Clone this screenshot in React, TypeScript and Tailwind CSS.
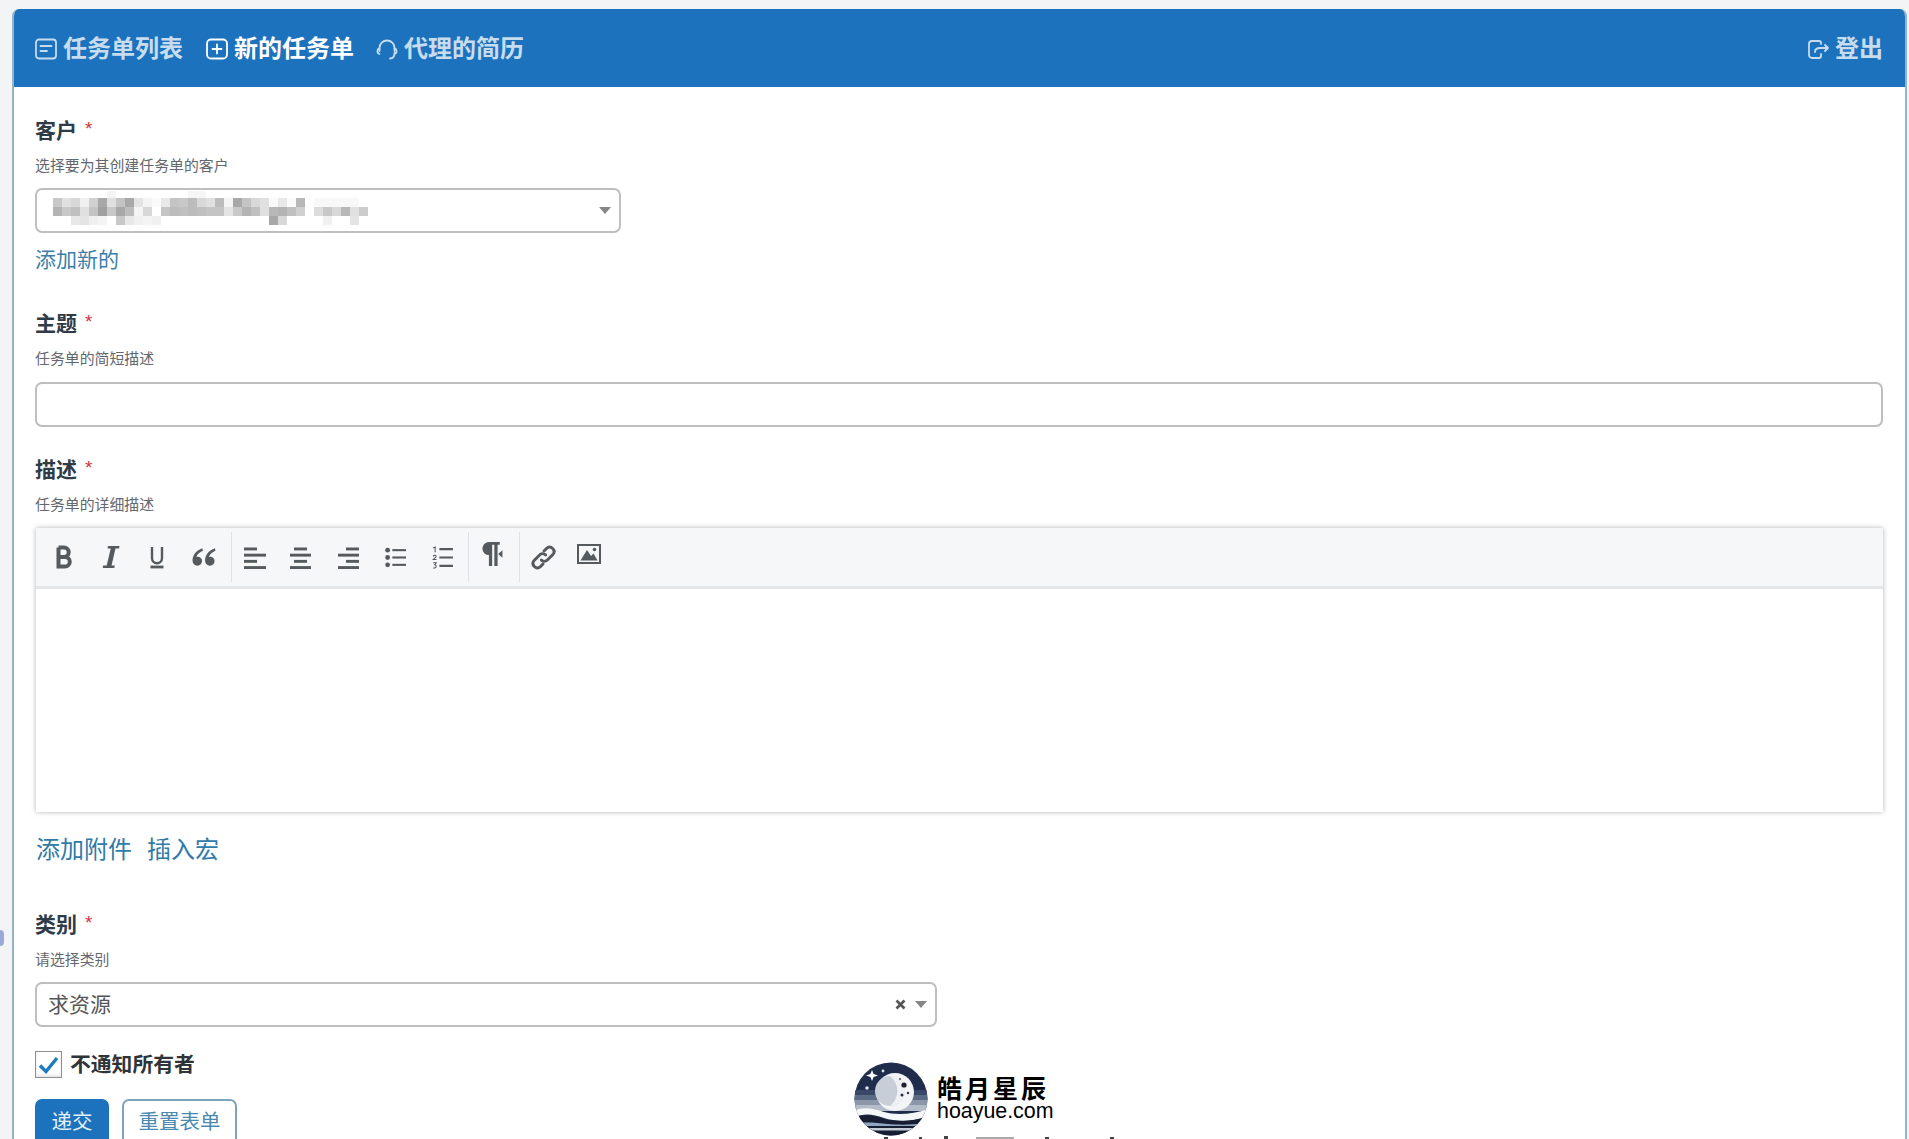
import React from "react";

const FONT = '"Liberation Sans","Noto Sans CJK SC",sans-serif';

function NavIcon({ kind, cls }: { kind: string; cls: string }) {
  return (
    <svg width="22" height="22" viewBox="0 0 22 22" fill="none" stroke="currentColor" strokeWidth="1.8" strokeLinecap="round" strokeLinejoin="round" className={cls}>
      {kind === "list" && (
        <>
          <rect x="1" y="1.500" width="20" height="19" rx="3" />
          <path d="M5.500 8h11M5.500 13h6.500" />
        </>
      )}
      {kind === "plus" && (
        <>
          <rect x="1" y="1.500" width="20" height="19" rx="4" />
          <path d="M11 6.500v9M6.500 11h9" />
        </>
      )}
      {kind === "head" && (
        <>
          <path d="M3.500 13V10a7.500 7.500 0 0 1 15 0v3" />
          <path d="M3.500 10.500c-2.500.5-3 4.500 0 5.500M18.500 10.500c2.500.5 3 4.500 0 5.500M18.500 15c0 3.500-2 5.500-4.500 5.500" />
        </>
      )}
      {kind === "out" && (
        <>
          <path d="M14 16v2a2 2 0 0 1-2 2H5a3 3 0 0 1-3-3V6a3 3 0 0 1 3-3h7a2 2 0 0 1 2 2v1" />
          <path d="M8 14c0-3 2-4 5-4h8M18 7l3 3-3 3" />
        </>
      )}
    </svg>
  );
}

function Field({ title, help, mt, children }: { title: string; help: string; mt: string; children: React.ReactNode }) {
  return (
    <div className={mt}>
      <div className="h-[30px] pt-[2px] flex items-center text-[21px] font-bold text-[#2f3c48] leading-[28px]">
        {title}
        <span className="ml-[8px] -mt-[4px] text-[19px] font-normal text-[#d0323c]">*</span>
      </div>
      <div className="mt-[11px] h-[20px] text-[14.9px] leading-[20px] text-[#63686e]">{help}</div>
      {children}
    </div>
  );
}

function Caret() {
  return <span className="w-0 h-0 border-x-[6px] border-x-transparent border-t-[7px] border-t-[#868686]" />;
}

const rowTop = ["", "", "", "", "", "", "#f4f4f4", "", "", "", "", "", "", "", "", "#f6f6f6", "#f6f6f6"];
const rowA = ["#c8c8c8", "#e0e0e0", "#d8d8d8", "#f0f0f0", "#d0d0d0", "#a8a8a8", "#e0e0e0", "#c4c4c4", "#a8a8a8", "#e4e4e4", "#f4f4f4", "#fafafa", "#e8e8e8", "#c4c4c4", "#c8c8c8", "#bcbcbc", "#d8d8d8", "#e0e0e0", "#bcbcbc", "#f4f4f4", "#a8a8a8", "#c4c4c4", "#d8d8d8", "#e0e0e0", "#fafafa", "#e8e8e8", "#fafafa", "#b8b8b8", "", "#f8f8f8", "#f8f8f8", "#f8f8f8", "#f8f8f8", "#f8f8f8", ""];
const rowB = ["#b4b4b4", "#c8c8c8", "#c0c0c0", "#e0e0e0", "#c4c4c4", "#a0a0a0", "#c8c8c8", "#a8a8a8", "#bcbcbc", "#f4f4f4", "#d8d8d8", "", "#c4c4c4", "#bcbcbc", "#c0c0c0", "#bcbcbc", "#c0c0c0", "#c4c4c4", "#c4c4c4", "#e4e4e4", "#c8c8c8", "#b4b4b4", "#c0c0c0", "#e0e0e0", "#b8b8b8", "#b4b4b4", "#c0c0c0", "#d0d0d0", "", "#dcdcdc", "#c8c8c8", "#d8d8d8", "#b8b8b8", "#e0e0e0", "#cccccc"];
const rowC = ["", "", "#e8e8e8", "#e4e4e4", "#f0f0f0", "#f4f4f4", "", "#c8c8c8", "#e8e8e8", "#f0f0f0", "#f4f4f4", "#f0f0f0", "", "", "", "", "", "", "", "", "", "", "", "", "#a8a8a8", "#d8d8d8", "", "", "", "", "#f0f0f0", "", "", "#e4e4e4", ""];

function BlurredValue() {
  const rows: [string[], number][] = [[rowTop, 2], [rowA, 9], [rowB, 18], [rowC, 27]];
  return (
    <svg width="340" height="43" viewBox="0 0 340 43" className="absolute -left-[2px] -top-[1px]">
      {rows.map(([row, y], r) =>
        row.map((c, i) => (c ? <rect key={`${r}-${i}`} x={18 + i * 9} y={y} width="9" height="9" fill={c} /> : null))
      )}
    </svg>
  );
}

const G = "#555a5e";
function Tool({ w, children }: { w: string; children: React.ReactNode }) {
  return <div className={`${w} h-full flex items-center justify-center shrink-0`}>{children}</div>;
}
function Sep() {
  return <div className="w-px h-[50px] self-center bg-[#e0e3e5] shrink-0" />;
}
function Lines({ rows }: { rows: [number, number][] }) {
  return (
    <svg width="23" height="23" viewBox="0 0 23 23">
      {rows.map((r, i) => (
        <rect key={i} x={r[0]} y={1.5 + i * 6.2} width={r[1]} height="2.900" fill={G} />
      ))}
    </svg>
  );
}

function Toolbar() {
  return (
    <div className="h-[61px] bg-[#f5f7f8] border-b-[3px] border-b-[#e3e5e6] flex items-center pl-[4px]">
      <Tool w="w-[47px]">
        <svg width="18" height="24" viewBox="0 0 18 24" fill="none" stroke={G} strokeWidth="4"><path d="M3.500 2.500v19h6.500a4.800 4.800 0 0 0 0-9.600H3.500M3.500 11.900H9a4.700 4.700 0 0 0 0-9.400H3.500" /></svg>
      </Tool>
      <Tool w="w-[47px]">
        <svg width="18" height="24" viewBox="0 0 18 24" fill={G}><path d="M6 1h11.500l-.5 2.500h-3.500L9.500 20.500h3.300l-.5 2.500H.7l.5-2.500h3.500L8.700 3.500H5.500z" /></svg>
      </Tool>
      <Tool w="w-[46px]">
        <svg width="16" height="24" viewBox="0 0 16 24" fill="none" stroke={G}><path d="M3 2v11c0 7 10 7 10 0V2" strokeWidth="2.400" /><path d="M1.500 22h13" strokeWidth="2.800" /></svg>
      </Tool>
      <Tool w="w-[47px]">
        <svg width="24" height="20" viewBox="0 0 22 18" fill={G}><path d="M9.500 1C4 3 .5 7 .5 12c0 3 2 5 4.500 5s4.200-1.900 4.200-4.300-1.700-4-4-4c-.5 0-.9.100-1.200.2C4.800 6.500 6.800 4.500 10 3.200zM21 1c-5.500 2-9 6-9 11 0 3 2 5 4.500 5s4.200-1.900 4.200-4.300-1.700-4-4-4c-.5 0-.9.100-1.200.2.800-2.400 2.800-4.400 6-5.700z" /></svg>
      </Tool>
      <div className="w-[4px]" />
      <Sep />
      <Tool w="w-[44px]"><Lines rows={[[1, 13], [1, 22], [1, 13], [1, 22]]} /></Tool>
      <Tool w="w-[49px]"><Lines rows={[[5, 13], [1, 21], [5, 13], [1, 21]]} /></Tool>
      <Tool w="w-[46px]"><Lines rows={[[9, 13], [1, 21], [9, 13], [1, 21]]} /></Tool>
      <Tool w="w-[48px]">
        <svg width="21" height="21" viewBox="0 0 20 20" fill={G}>
          <circle cx="2.500" cy="3" r="2.300" /><circle cx="2.500" cy="10" r="2.300" /><circle cx="2.500" cy="17" r="2.300" />
          <rect x="7" y="2" width="13" height="2" /><rect x="7" y="9" width="13" height="2" /><rect x="7" y="16" width="13" height="2" />
        </svg>
      </Tool>
      <Tool w="w-[46px]">
        <svg width="21" height="23" viewBox="0 0 20 22" fill="none" stroke={G}>
          <path d="M1 2l2-1v5M1 10c1-2 3.500-1 2.600.6L1 13h3.200M1 16h3l-1.500 2c2 0 2 3-.1 3H1" strokeWidth="1" />
          <path d="M7 3h13M7 11h13M7 19h13" strokeWidth="2" />
        </svg>
      </Tool>
      <div className="w-[3px]" />
      <Sep />
      <Tool w="w-[42px]">
        <svg width="26" height="26" viewBox="0 0 24 24" fill={G} className="-mt-[6px]"><path d="M9 1h12v2.500h-2V23h-3V3.500h-2V23h-3V13a6 6 0 0 1 0-12h-.1z" /><path d="M23.500 8.500v7L19.500 12z" /></svg>
      </Tool>
      <div className="w-[8px]" />
      <Sep />
      <Tool w="w-[47px]">
        <svg width="27" height="27" viewBox="0 0 26 26" fill="none" stroke={G} strokeWidth="2.800" strokeLinecap="round"><path d="M11 15.500c2 1.800 4.500 1.300 6-.3l5-5c3.500-4-2-9.500-6-6l-2.500 2.500" /><path d="M15 10.500c-2-1.800-4.500-1.300-6 .3l-5 5c-3.500 4 2 9.500 6 6l2.500-2.500" /></svg>
      </Tool>
      <Tool w="w-[44px]">
        <svg width="24" height="20" viewBox="0 0 24 20" className="-mt-[6px]"><rect x="1" y="1" width="22" height="18" fill="none" stroke={G} strokeWidth="2" /><path d="M3.500 16.500 10 6l4 6 2.500-2.500 4 7z" fill={G} /><circle cx="17.500" cy="5.500" r="1.800" fill={G} /></svg>
      </Tool>
    </div>
  );
}

function Logo() {
  return (
    <svg width="74" height="74" viewBox="0 0 74 74">
      <defs>
        <clipPath id="disc"><circle cx="37" cy="37" r="36.500" /></clipPath>
      </defs>
      <g clipPath="url(#disc)">
        <rect width="74" height="74" fill="#1f2c4c" />
        <rect y="28" width="74" height="5" fill="#3a4868" />
        <rect y="33" width="74" height="5" fill="#5d6a84" />
        <rect y="38" width="74" height="5" fill="#8c97aa" />
        <rect y="43" width="74" height="6" fill="#b4bcca" />
        <circle cx="41" cy="30" r="19" fill="#f3f4f6" />
        <circle cx="36" cy="29" r="15" fill="#c8ced8" />
        <path d="M36 14a15 15 0 0 1 0 30 19 19 0 0 0 0-30z" fill="#eef0f3" />
        <circle cx="50" cy="23" r="2.600" fill="#1c2230" />
        <circle cx="48" cy="33" r="1.500" fill="#2a3040" />
        <circle cx="54" cy="31" r="1.200" fill="#2a3040" />
        <circle cx="46" cy="17" r="0.900" fill="#3a4050" />
        <path d="M0 49c10-5 20-2 30 1s28 3 44-3v7c-14 6-32 6-44 2S10 51 0 56z" fill="#f5f6f8" />
        <path d="M0 56c10-5 20-2 30 1s30 3 44-3v20H0z" fill="#171e33" />
        <path d="M4 61c10-1 20 0 30 1s26 1 36-1v3H4z" fill="#93a6bf" />
        <rect y="66" width="74" height="2.500" fill="#c5ccd8" />
      </g>
      <path d="M18 8l1.600 4L24 13.500l-4.400 1.600L18 19l-1.600-3.900L12 13.500l4.400-1.500z" fill="#fff" />
      <circle cx="29" cy="9" r="1.400" fill="#dfe4ee" />
      <circle cx="13" cy="26" r="1.800" fill="#dfe4ee" />
    </svg>
  );
}

export default function App() {
  return (
    <div className="relative h-[1139px] overflow-hidden bg-[#f3f4f6] pt-[9px] pl-[12px] pr-[2px]" style={{ fontFamily: FONT }}>
      <div className="absolute left-0 top-[930px] w-[4px] h-[16px] rounded-r-full bg-[#9aa9d8]" />
      <div className="min-h-[1200px] rounded-t-[7px] bg-white border-x-2 border-x-[#94b3c8] overflow-hidden">
        <header className="-mx-[2px] h-[78px] pt-[2px] bg-[#1d72bd] flex items-center pl-[23px] pr-[24px] text-[24px] font-bold">
          <nav className="flex items-center text-[#c7dcef]">
            <a className="flex items-center gap-[6px]"><NavIcon kind="list" cls="text-[#c7dcef]" />任务单列表</a>
            <a className="ml-[23px] flex items-center gap-[6px] text-white"><NavIcon kind="plus" cls="text-white" />新的任务单</a>
            <a className="ml-[22px] flex items-center gap-[6px]"><NavIcon kind="head" cls="text-[#c7dcef]" />代理的简历</a>
          </nav>
          <a className="ml-auto flex items-center gap-[6px] text-[#c7dcef]"><NavIcon kind="out" cls="text-[#c7dcef]" />登出</a>
        </header>

        <main className="pl-[21px] pr-[22px]">
          <Field title="客户" help="选择要为其创建任务单的客户" mt="mt-[28px]">
            <div className="relative mt-[12px] w-[586px] h-[45px] bg-white border-2 border-[#bcbec0] rounded-[7px] flex items-center justify-end pr-[8px]">
              <BlurredValue />
              <Caret />
            </div>
            <a className="block mt-[12px] h-[30px] leading-[30px] text-[21px] text-[#3b7fa8]">添加新的</a>
          </Field>

          <Field title="主题" help="任务单的简短描述" mt="mt-[33px]">
            <div className="mt-[13px] h-[45px] bg-white border-2 border-[#bcbec0] rounded-[7px]" />
          </Field>

          <Field title="描述" help="任务单的详细描述" mt="mt-[27px]">
            <div className="mt-[13px] h-[284px] bg-white shadow-[0_0_5px_rgba(0,0,0,0.3)] ml-[1px]">
              <Toolbar />
            </div>
          </Field>

          <div className="mt-[23px] h-[30px] flex gap-[15px] pl-[1px] text-[24px] leading-[30px] text-[#2f7ba8]">
            <a>添加附件</a>
            <a>插入宏</a>
          </div>

          <Field title="类别" help="请选择类别" mt="mt-[44px]">
            <div className="mt-[12px] w-[902px] h-[45px] bg-white border-2 border-[#bcbec0] rounded-[7px] flex items-center pl-[11px] pr-[8px] text-[21px] text-[#555]">
              求资源
              <svg width="11" height="11" viewBox="0 0 11 11" className="ml-auto mr-[9px]"><path d="M1.500 1.500l8 8M9.500 1.500l-8 8" stroke="#555" strokeWidth="2.600" /></svg>
              <Caret />
            </div>
          </Field>

          <label className="mt-[24px] h-[27px] flex items-center gap-[8px]">
            <span className="w-[27px] h-[27px] bg-white border border-[#8f8f8f] shadow-[inset_0_-2px_3px_rgba(0,0,0,0.1)] flex items-center justify-center">
              <svg width="21" height="18" viewBox="0 0 21 18" fill="none"><path d="M2 9.500l6 6L19 2" stroke="#1d7cc0" strokeWidth="3.400" /></svg>
            </span>
            <span className="text-[20.800px] font-bold text-[#2f3438]">不通知所有者</span>
          </label>

          <div className="mt-[21px] flex gap-[13px] text-[20.500px]">
            <button className="w-[74px] h-[46px] rounded-[7px] bg-[#1d72bd] text-[#e4f0fa]">递交</button>
            <button className="w-[115px] h-[46px] rounded-[7px] bg-white border-2 border-[#7ea3bb] text-[#4a8ab0]">重置表单</button>
          </div>
        </main>
      </div>

      <div className="absolute left-[854px] top-[1062px] flex gap-[9px]">
        <Logo />
        <div className="mt-[13px] text-black">
          <div className="text-[25px] leading-[25px] font-bold tracking-[3px] whitespace-nowrap" style={{ fontFamily: '"Noto Sans CJK SC",serif' }}>皓月星辰</div>
          <div className="text-[21.400px] leading-[22px] whitespace-nowrap">hoayue.com</div>
        </div>
      </div>
      <svg width="240" height="3" viewBox="0 0 240 3" className="absolute left-[880px] top-[1136px]">
        <g fill="#444">
          <rect x="4" y="1" width="4" height="2" />
          <rect x="39" y="1" width="3" height="2" />
          <rect x="64" y="0" width="4" height="3" />
          <rect x="96" y="1" width="38" height="2" fill="#aaa" />
          <rect x="165" y="1" width="4" height="2" />
          <rect x="230" y="1" width="4" height="2" />
        </g>
      </svg>
    </div>
  );
}
